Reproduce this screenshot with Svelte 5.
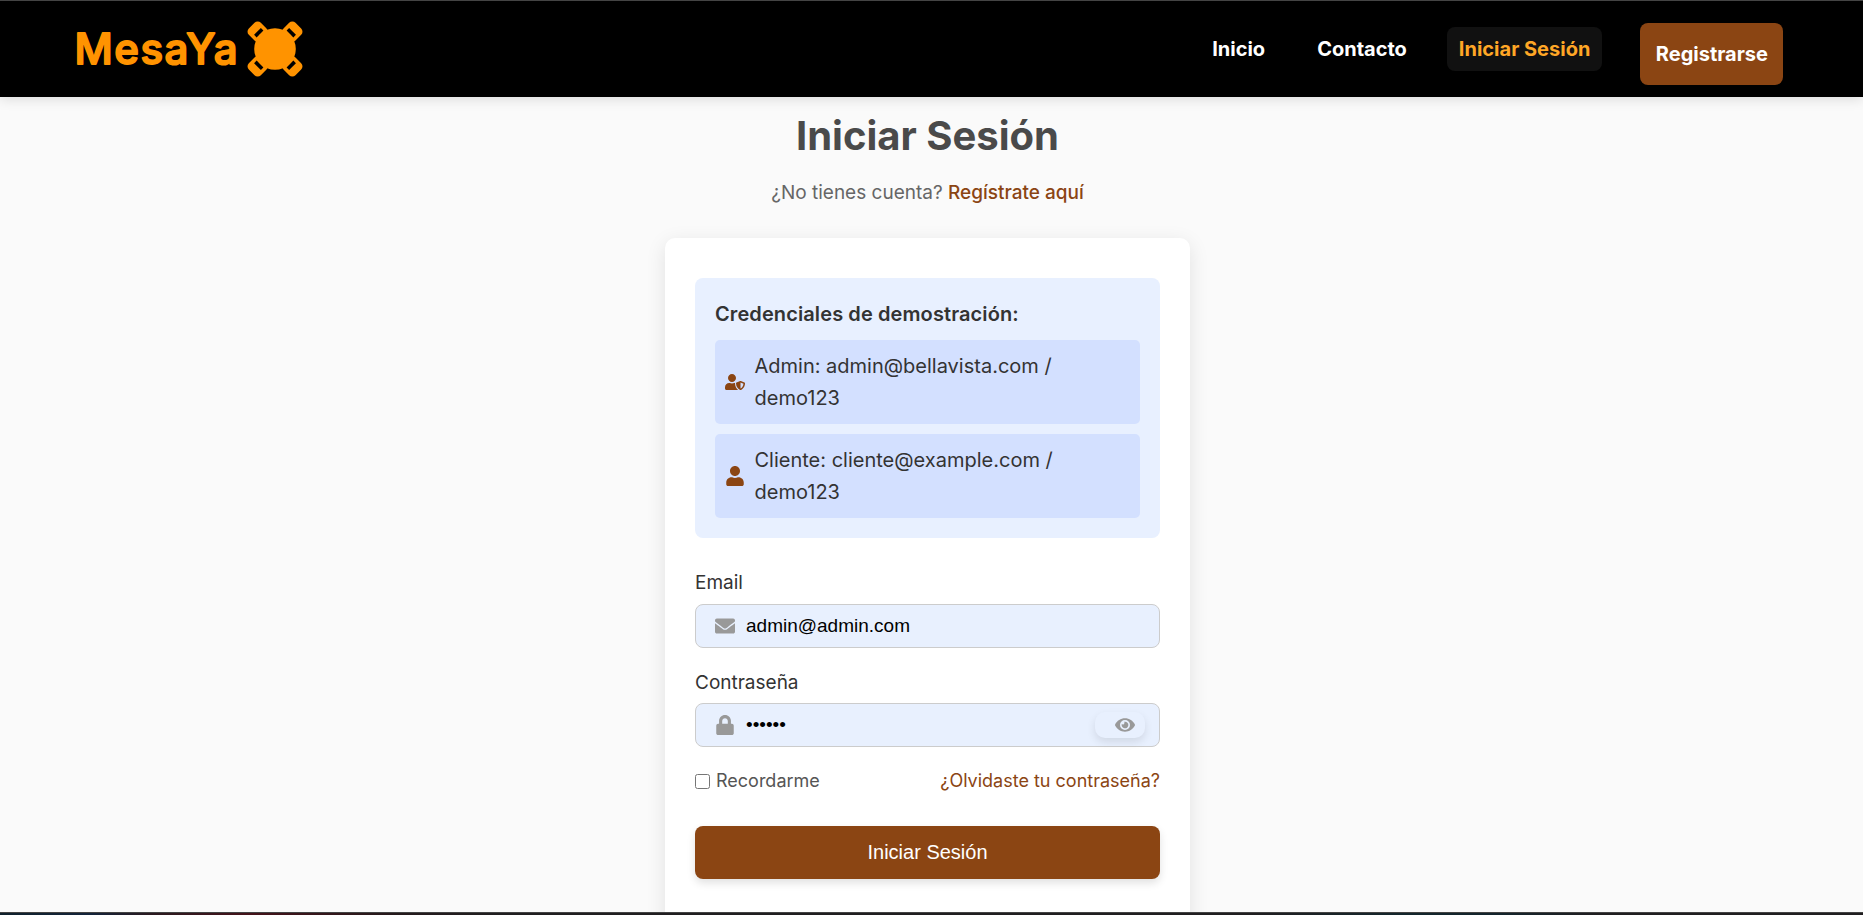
<script>
  const links = [
    { label: 'Inicio', active: false },
    { label: 'Contacto', active: false },
    { label: 'Iniciar Sesión', active: true },
  ];
  const shield = 'M622.3 271.1l-115.2-45c-4.1-1.6-12.6-3.7-22.2 0l-115.2 45c-10.7 4.2-17.7 14-17.7 24.9 0 111.6 68.7 188.8 132.9 213.9 9.6 3.7 18 1.6 22.2 0C558.4 489.9 640 420.5 640 296c0-10.9-7-20.7-17.7-24.9zM496 462.4V273.3l95.5 37.3c-5.6 87.1-60.9 135.4-95.5 151.8zM224 256c70.7 0 128-57.3 128-128S294.7 0 224 0 96 57.3 96 128s57.3 128 128 128zm96 40c0-2.5.8-4.8 1.1-7.2-2.5-.1-4.9-.8-7.5-.8h-16.7c-22.2 10.2-46.9 16-72.9 16s-50.6-5.8-72.9-16h-16.7C60.2 288 0 348.2 0 422.4V464c0 26.5 21.5 48 48 48h352c6.8 0 13.3-1.5 19.2-4-54-42.9-99.2-116.7-99.2-212z';
  const user = 'M224 256c70.7 0 128-57.3 128-128S294.7 0 224 0 96 57.3 96 128s57.3 128 128 128zm89.6 32h-16.7c-22.2 10.2-46.9 16-72.9 16s-50.6-5.8-72.9-16h-16.7C60.2 288 0 348.2 0 422.4V464c0 26.5 21.5 48 48 48h352c26.5 0 48-21.5 48-48v-41.6c0-74.2-60.2-134.4-134.4-134.4z';
  const creds = [
    { icon: shield, box: '0 0 640 512', text: 'Admin: admin@bellavista.com / demo123' },
    { icon: user, box: '0 0 448 512', text: 'Cliente: cliente@example.com / demo123' },
  ];
  let email = $state('admin@admin.com');
  let password = $state('demo12');
  let remember = $state(false);
</script>

<div class="page">
  <header>
    <div class="logo">
      <svg class="word" width="166" height="60" viewBox="0 0 166 60">
        <text x="-0.5" y="43.7" textLength="163" lengthAdjust="spacing">MesaYa</text>
      </svg>
      <svg class="table" width="56" height="56" viewBox="-28 -28 56 56">
        {#each [45, 135, 225, 315] as angle}
          <g transform="rotate({angle})">
            <rect x="-8.5" y="-33" width="17" height="17" rx="4.5" fill="#ff9300" />
            <rect x="-4.8" y="-24.8" width="9.6" height="3.6" fill="#000" />
          </g>
        {/each}
        <circle r="20.8" fill="#ff9300" />
      </svg>
    </div>
    <nav>
      {#each links as link}
        <a class="link" class:active={link.active} href="#top">{link.label}</a>
      {/each}
      <a class="register" href="#top">Registrarse</a>
    </nav>
  </header>

  <main>
    <h1>Iniciar Sesión</h1>
    <p class="sub">¿No tienes cuenta? <a href="#top">Regístrate aquí</a></p>

    <section class="card">
      <div class="demo">
        <h2>Credenciales de demostración:</h2>
        {#each creds as c}
          <div class="cred">
            <svg viewBox={c.box} width="20" height="20"><path d={c.icon} fill="#8b4513" /></svg>
            <span>{c.text}</span>
          </div>
        {/each}
      </div>

      <label for="email">Email</label>
      <div class="field">
        <svg viewBox="0 0 512 512" width="20" height="20"><path fill="#999" d="M502.3 190.8c3.9-3.1 9.7-.2 9.7 4.7V400c0 26.5-21.5 48-48 48H48c-26.5 0-48-21.5-48-48V195.6c0-5 5.7-7.8 9.7-4.7 22.4 17.4 52.1 39.5 154.1 113.6 21.1 15.4 56.7 47.8 92.2 47.6 35.7.3 72-32.8 92.3-47.6 102-74.1 131.6-96.3 154-113.7zM256 320c23.2.4 56.6-29.2 73.4-41.4 132.7-96.3 142.8-104.7 173.4-128.7 5.8-4.5 9.2-11.5 9.2-18.9v-19c0-26.5-21.5-48-48-48H48c-26.5 0-48 21.5-48 48v19c0 7.4 3.4 14.3 9.2 18.9 30.6 23.9 40.7 32.4 173.4 128.7 16.8 12.2 50.2 41.8 73.4 41.4z" /></svg>
        <input id="email" type="text" bind:value={email} />
      </div>

      <label class="second" for="password">Contraseña</label>
      <div class="field">
        <svg viewBox="0 0 448 512" width="20" height="20"><path fill="#999" d="M400 224h-24v-72C376 68.2 307.8 0 224 0S72 68.2 72 152v72H48c-26.5 0-48 21.5-48 48v192c0 26.5 21.5 48 48 48h352c26.5 0 48-21.5 48-48V272c0-26.5-21.5-48-48-48zm-104 0H152v-72c0-39.7 32.3-72 72-72s72 32.3 72 72v72z" /></svg>
        <input id="password" type="password" bind:value={password} />
        <button class="eye" type="button" aria-label="Mostrar">
          <svg viewBox="0 0 576 512" width="20" height="18"><path fill="#999" d="M572.52 241.4C518.29 135.59 410.93 64 288 64S57.68 135.64 3.48 241.41a32.35 32.35 0 0 0 0 29.19C57.71 376.41 165.07 448 288 448s230.32-71.64 284.52-177.41a32.35 32.35 0 0 0 0-29.19zM288 400a144 144 0 1 1 144-144 143.93 143.93 0 0 1-144 144zm0-240a95.31 95.31 0 0 0-25.31 3.79 47.85 47.85 0 0 1-66.9 66.9A95.78 95.78 0 1 0 288 160z" /></svg>
        </button>
      </div>

      <div class="options">
        <label class="remember"><input type="checkbox" bind:checked={remember} />Recordarme</label>
        <a href="#top">¿Olvidaste tu contraseña?</a>
      </div>

      <button class="submit" type="button">Iniciar Sesión</button>
    </section>
  </main>
  <div class="edge"></div>
</div>

<style>
  :global(body) { margin: 0; overflow: hidden; }
  .page, .page * { box-sizing: border-box; }
  .page {
    display: grid;
    grid-template-rows: 97px 815px 3px;
    height: 915px;
    background: #fafafa;
    font-family: Inter, sans-serif;
    font-size: 20px;
    color: #333;
  }
  a { text-decoration: none; color: #8b4513; }
  header {
    position: relative;
    z-index: 1;
    display: flex;
    justify-content: space-between;
    align-items: flex-start;
    padding: 0 80px 0 75px;
    background: #000;
    border-top: 1px solid #444;
    box-shadow: 0 2px 12px rgba(0, 0, 0, 0.13);
  }
  .logo { display: flex; align-items: center; gap: 6px; padding-top: 19px; }
  .table { margin-top: -2px; }
  .word { overflow: visible; }
  .word text {
    font: 500 42px Inter, sans-serif;
    fill: #ff9300;
    stroke: #ff9300;
    stroke-width: 1.8px;
    stroke-linejoin: round;
  }
  nav { display: flex; align-items: flex-start; }
  .link {
    height: 44px;
    margin-top: 26px;
    margin-right: 28px;
    padding: 0 12px;
    border-radius: 8px;
    font-weight: 700;
    line-height: 45px;
    color: #fff;
  }
  .link.active { background: #111; color: #ffa726; margin-right: 38px; }
  .register {
    height: 62px;
    margin-top: 22px;
    padding: 0 15px 0 15.5px;
    border-radius: 8px;
    background: #8b4513;
    color: #fff;
    font-weight: 700;
    line-height: 62px;
  }
  main {
    display: flex;
    flex-direction: column;
    align-items: center;
    padding: 15px 8px 0 0;
    overflow: hidden;
  }
  h1 { margin: 0; font-size: 40px; line-height: 48px; font-weight: 700; color: #4a4a4a; }
  .sub { margin: 17px 0 0; font-size: 19px; line-height: 32px; color: #666; }
  .sub a { font-weight: 500; }
  .card {
    display: flex;
    flex-direction: column;
    flex: none;
    width: 525px;
    height: 760px;
    margin-top: 29px;
    padding: 40px 30px;
    border-radius: 10px;
    background: #fff;
    box-shadow: 0 5px 20px rgba(0, 0, 0, 0.1);
  }
  .demo {
    display: flex;
    flex-direction: column;
    gap: 10px;
    height: 260px;
    padding: 20px;
    border-radius: 8px;
    background: #e8f0ff;
  }
  h2 { margin: 0; font-size: 20px; font-weight: 600; line-height: 32px; letter-spacing: 0.1px; }
  .cred {
    display: flex;
    align-items: center;
    gap: 9.5px;
    height: 84px;
    padding: 10px;
    border-radius: 5px;
    background: #d3e0ff;
    line-height: 32px;
  }
  .cred svg { flex: none; }
  .cred span { width: 320px; }
  label { font-size: 19px; line-height: 30px; margin-top: 30px; }
  label.second { margin-top: 20px; }
  .field {
    display: flex;
    align-items: center;
    gap: 11px;
    height: 44px;
    margin-top: 6px;
    padding: 0 14px 0 19px;
    border: 1px solid #ccc;
    border-radius: 8px;
    background: #e8f0fe;
  }
  .second + .field { margin-top: 5px; }
  .field svg { flex: none; }
  .field input {
    flex: 1;
    min-width: 0;
    height: 40px;
    padding: 0;
    border: 0;
    outline: 0;
    background: transparent;
    color: #000;
    font: 19px 'Liberation Sans', Arial, sans-serif;
  }
  .eye {
    display: flex;
    justify-content: flex-end;
    align-items: center;
    width: 50px;
    height: 26px;
    padding: 0 10px 0 0;
    border: 0;
    border-radius: 10px;
    background: #e8f0fe;
    box-shadow: 0 4px 8px rgba(0, 0, 0, 0.1);
  }
  .options {
    display: flex;
    justify-content: space-between;
    align-items: center;
    margin-top: 19px;
    font-size: 18px;
    line-height: 30px;
  }
  .remember {
    display: flex;
    align-items: center;
    gap: 6px;
    margin: 0;
    font-size: 18px;
    color: #555;
  }
  .remember input { width: 15px; height: 15px; margin: 0; }
  .submit {
    height: 53px;
    margin-top: 30px;
    border: 0;
    border-radius: 8px;
    background: #8b4513;
    color: #fff;
    font: 20px 'Liberation Sans', Arial, sans-serif;
    box-shadow: 0 4px 8px rgba(0, 0, 0, 0.12);
  }
  .edge {
    background: linear-gradient(90deg, #10212c 0, #13233a 90px, #2a1a20 150px, #45121a 250px, #241a1c 400px, #201e20 500px, #201e20 1250px, #14262c 1400px, #14242c 1500px, #201e20 1600px);
    border-top: 1px solid #444;
  }
</style>
